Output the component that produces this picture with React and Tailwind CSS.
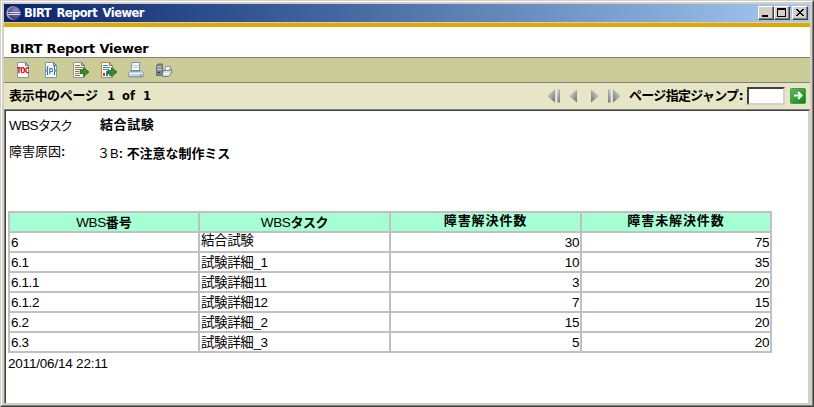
import React from "react";

const verdana = "font-['DejaVu_Sans','Noto_Sans_CJK_JP',sans-serif]";
const arial = "font-['Liberation_Sans','Noto_Sans_CJK_JP',sans-serif]";

const rows = [
  ["6", "結合試験", "30", "75"],
  ["6.1", "試験詳細_1", "10", "35"],
  ["6.1.1", "試験詳細11", "3", "20"],
  ["6.1.2", "試験詳細12", "7", "15"],
  ["6.2", "試験詳細_2", "15", "20"],
  ["6.3", "試験詳細_3", "5", "20"],
];

function EclipseLogo() {
  return (
    <svg width="16" height="16" viewBox="0 0 16 16" className="shrink-0">
      <defs>
        <radialGradient id="ecl" cx="0.65" cy="0.25" r="0.8">
          <stop offset="0" stopColor="#8f8fc4" />
          <stop offset="1" stopColor="#38346f" />
        </radialGradient>
      </defs>
      <circle cx="7" cy="8" r="6.7" fill="#b9a3bd" />
      <circle cx="8.3" cy="8" r="6.2" fill="url(#ecl)" />
      <path d="M2.5 7.5H14.5M2.5 9.5H14.5" stroke="#d5dcf3" strokeWidth="1" />
    </svg>
  );
}

function Page({ children }) {
  return (
    <svg width="18" height="16" viewBox="0 0 18 16" className="shrink-0">
      <path d="M1.5 .5H9.5L12.5 3.5V15.5H1.5Z" fill="#fbfcfd" stroke="#8796a5" />
      <path d="M9.5 .5V3.5H12.5Z" fill="#c3d1dd" stroke="#637c92" />
      {children}
    </svg>
  );
}

function TocIcon() {
  return (
    <Page>
      <g fill="none" stroke="#d31e24" strokeWidth="1.4">
        <path d="M1 5.7H4.8M2.9 5.7V11M13 6C10.6 5.3 9.8 6.8 9.8 8.3S10.6 11.2 13 10.4" />
        <rect x="5.3" y="5.8" width="3" height="4.8" rx="1.3" />
      </g>
    </Page>
  );
}

function ParamIcon() {
  return (
    <Page>
      <g fill="none" stroke="#2877aa" strokeWidth="1.1">
        <path d="M4.3 4.5H3.5V7.5L2.3 8.5L3.5 9.5V12.5H4.3M9.7 4.5H10.5V7.5L11.7 8.5L10.5 9.5V12.5H9.7M5.8 12V6.5H7.2C9 6.5 9 9.8 7.2 9.8H5.8" />
      </g>
    </Page>
  );
}

function GreenArrow() {
  return <path d="M8 8.5H11.5V5.5L17 10L11.5 14.5V11.5H8Z" fill="#3d8b24" stroke="#215e15" strokeWidth=".8" />;
}

function ExportDataIcon() {
  return (
    <Page>
      <path d="M3 3.5H8M3 5.5H11M3 7.5H11M3 9.5H7M3 11.5H7M3 13.5H8" stroke="#8a7432" />
      <GreenArrow />
    </Page>
  );
}

function ExportReportIcon() {
  return (
    <Page>
      <path d="M1.5 15V.5H9.5L12.5 3.5" fill="none" stroke="#c98b2c" />
      <path d="M3 3.5H8M3 5.5H10M3 7.5H9" stroke="#567eb3" />
      <path d="M3 11H5V14H3Z" fill="#e02b24" />
      <path d="M6 9H8V14H6Z" fill="#2878ce" />
      <path d="M9 12H11V14H9Z" fill="#37a14c" />
      <GreenArrow />
    </Page>
  );
}

function PrinterIcon() {
  return (
    <svg width="18" height="16" viewBox="0 0 18 16" className="shrink-0">
      <path d="M4 .5H11.5V9H3Z" fill="#f8fbff" stroke="#8291a1" />
      <path d="M5 3.5H10.5M5 5.5H10.5" stroke="#b4c9e0" />
      <path d="M2.5 8.5H13L15.5 11V14.5H.5V11Z" fill="#c5d3e2" stroke="#8a9bae" />
      <path d="M3 9H12" stroke="#5b6e82" />
      <path d="M1 11.5H15" stroke="#f0f6ff" />
      <path d="M1 15H15" stroke="#8a9bae" strokeWidth="1" />
      <path d="M12 13H14" stroke="#2b6fc8" />
    </svg>
  );
}

function PrintServerIcon() {
  return (
    <svg width="18" height="16" viewBox="0 0 18 16" className="shrink-0">
      <path d="M.5 3.5L2 2H6.5V12.5L5.5 13.5H.5Z" fill="#7d858c" stroke="#6a7278" />
      <path d="M1 5H5.5M1 7.5H5.5" stroke="#d5dce2" />
      <path d="M2 10.5H4" stroke="#303840" />
      <path d="M9.5 4.5H14.5L13.5 9H9Z" fill="#fcfdff" stroke="#8998a7" />
      <path d="M7.5 8.5H13.5L15.5 7V11L12.5 14.5H6.5V11Z" fill="#d7e0ea" stroke="#6e7e8d" />
      <path d="M7.5 11.5H13" stroke="#fff" />
    </svg>
  );
}

function NavArrow({ flip, bar }) {
  return (
    <svg width="14" height="14" viewBox="0 0 14 14" className={flip ? "shrink-0 -scale-x-100" : "shrink-0"}>
      <defs>
        <linearGradient id="nav" x1="0" y1="0" x2="1" y2="1">
          <stop offset="0" stopColor="#e5e5e5" />
          <stop offset="1" stopColor="#707070" />
        </linearGradient>
      </defs>
      <path d="M0 7L8 .5V13.5Z" fill="url(#nav)" />
      {bar && <path d="M10 .5H13V13.5H10Z" fill="url(#nav)" />}
    </svg>
  );
}

function WinButton({ children }) {
  return (
    <div className="flex h-3.5 w-4 shrink-0 border border-t-white border-r-[#404040] border-b-[#404040] border-l-white bg-[#d4d0c8]">
      <svg width="14" height="12" viewBox="0 0 14 12" shapeRendering="crispEdges">
        <path d="M13.5 0V11.5H0" fill="none" stroke="#808080" />
        {children}
      </svg>
    </div>
  );
}

function TitleBar() {
  return (
    <div className="flex h-[18px] items-center bg-linear-to-r from-[#0a246a] to-[#a6caf0] pr-0.5 pl-[2px]">
      <EclipseLogo />
      <span className={`${verdana} ml-[2px] text-[11.5px] leading-[18px] font-bold tracking-[-0.55px] whitespace-pre text-white [word-spacing:2px]`}>
        BIRT Report Viewer
      </span>
      <div className="ml-auto flex">
        <WinButton><path d="M3 8H9V10H3Z" fill="#000" /></WinButton>
        <WinButton>
          <path d="M2.5 1.5H10.5V9.5H2.5Z" fill="none" stroke="#000" />
          <path d="M2 1H11V3H2Z" fill="#000" />
        </WinButton>
        <div className="w-0.5" />
        <WinButton>
          <path d="M3 2H5V3H6V4H8V3H9V2H11V3H10V4H9V5H8V6H9V7H10V8H11V9H9V8H8V7H6V8H5V9H3V8H4V7H5V6H6V5H5V4H4V3H3Z" fill="#000" />
        </WinButton>
      </div>
    </div>
  );
}

function NavBar() {
  return (
    <div className={`${verdana} flex h-[26px] items-center bg-[#e6e6c6] pl-[5px] text-[11.5px] font-bold text-black`}>
      <span className="w-[98px] text-[13px] tracking-[-0.3px] whitespace-nowrap">表示中のページ</span>
      <span className="w-[15px] pt-0.5">1</span>
      <span className="w-[21px] pt-0.5">of</span>
      <span className="pt-0.5">1</span>
      <div className="ml-auto flex items-center">
        <div className="w-[22px]"><NavArrow bar /></div>
        <div className="w-[16px]"><NavArrow /></div>
        <div className="w-[22px]"><NavArrow flip /></div>
        <div className="w-[22px]"><NavArrow flip bar /></div>
        <span className="w-[118px] text-[13px] tracking-[-0.7px] whitespace-nowrap">ページ指定ジャンプ:</span>
        <div className="h-[18px] w-[38px] border-2 border-t-[#404040] border-r-[#d4d0c8] border-b-[#d4d0c8] border-l-[#404040] bg-white" />
        <svg width="16" height="16" viewBox="0 0 16 16" className="mr-1 ml-[5px]">
          <defs>
            <linearGradient id="go" x1="0" y1="0" x2="1" y2="1">
              <stop offset="0" stopColor="#65b665" />
              <stop offset="1" stopColor="#078507" />
            </linearGradient>
          </defs>
          <rect x=".5" y=".5" width="15" height="15" rx="1" fill="url(#go)" stroke="#4b994b" />
          <path d="M4 7.5H11.5M8 4L11.5 7.5L8 11" fill="none" stroke="#fff" strokeWidth="2" />
        </svg>
      </div>
    </div>
  );
}

function ReportTable() {
  return (
    <div className="grid w-[764px] grid-cols-[188px_189px_189px_188px] gap-0.5 bg-[#c0c0c0] p-0.5 text-[13.5px] tracking-[-0.4px]">
      <div className="h-[18px] bg-[#a6ffd3] text-center leading-[19px]">WBS<b className="text-[13px] tracking-[0px]">番号</b></div>
      <div className="h-[18px] bg-[#a6ffd3] text-center leading-[19px]">WBS<b className="text-[13px] tracking-[-0.4px]">タスク</b></div>
      <div className="h-[18px] bg-[#a6ffd3] text-center text-[13px] leading-[15px] font-bold tracking-[0.9px]">障害解決件数</div>
      <div className="h-[18px] bg-[#a6ffd3] text-center text-[13px] leading-[15px] font-bold tracking-[0.9px]">障害未解決件数</div>
      {rows.map((row, r) =>
        row.map((cell, c) => (
          <div
            key={`${r}-${c}`}
            className={
              "h-[18px] bg-white px-px whitespace-nowrap " +
              (c > 1 ? "text-right " : "") +
              (r === 0 && c === 1 ? "leading-[16px]" : "leading-[20px]")
            }
          >
            {cell}
          </div>
        ))
      )}
    </div>
  );
}

export default function App() {
  return (
    <div className="h-[407px] w-[814px] overflow-hidden border border-t-[#d4d0c8] border-r-[#404040] border-b-[#404040] border-l-[#d4d0c8] bg-[#d4d0c8]">
      <div className="flex h-full flex-col border border-t-white border-r-[#808080] border-b-[#808080] border-l-white p-0.5">
        <TitleBar />
        <div className="mt-px h-1 shrink-0 bg-[#dea900]" />
        <div className="h-[30px] shrink-0 bg-white pt-[14px] pl-1.5">
          <span className={`${verdana} block text-[13px] leading-[16px] font-bold tracking-[-0.2px] whitespace-nowrap text-black`}>
            BIRT Report Viewer
          </span>
        </div>
        <div className="flex h-[26px] shrink-0 items-center gap-2.5 border-y border-[#808080] bg-[#cccc99] pl-3">
          <TocIcon />
          <ParamIcon />
          <ExportDataIcon />
          <ExportReportIcon />
          <PrinterIcon />
          <PrintServerIcon />
        </div>
        <NavBar />
        <div className="min-h-0 flex-1 border-t border-l border-[#808080]">
          <div className={`${arial} h-full border-t border-r-2 border-l border-t-[#404040] border-r-[#d4d0c8] border-l-[#404040] bg-white pl-0.5 text-[13px] text-black`}>
            <div className="flex h-[30px] pl-px">
              <span className="w-[91px] pt-[5px] leading-[20px]">
                <span className="text-[13.5px] tracking-[-0.6px]">WBS</span>
                <span className="tracking-[-2px]">タスク</span>
              </span>
              <span className="pt-[4px] leading-[20px] font-bold tracking-[0.6px]">結合試験</span>
            </div>
            <div className="flex h-[70px] pl-px">
              <span className="w-[88px] pt-px leading-[20px]">障害原因<b>:</b></span>
              <span className="pt-[3px] leading-[20px] font-bold whitespace-nowrap">
                <span className="font-normal">３B</span>: <span className="tracking-[-0.05px]">不注意な制作ミス</span>
              </span>
            </div>
            <ReportTable />
            <div className="text-[13.5px] leading-[21px] tracking-[-0.2px]">2011/06/14 22:11</div>
          </div>
        </div>
      </div>
    </div>
  );
}
